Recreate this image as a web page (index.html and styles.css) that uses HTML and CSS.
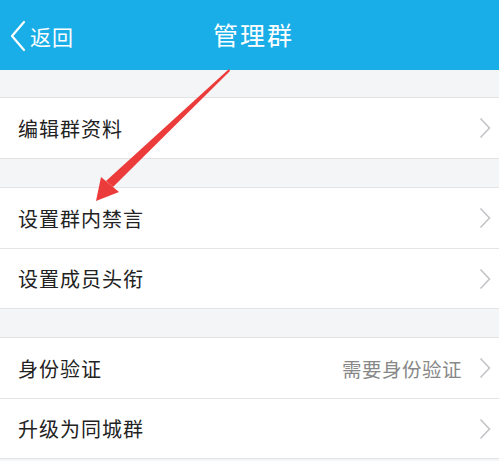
FILE: index.html
```html
<!DOCTYPE html>
<html lang="zh-CN">
<head>
<meta charset="utf-8">
<link rel="stylesheet" href="styles.css">
</head>
<body>
<div class="page">
  <header class="nav">
    <div class="back">
      <svg class="back-icon" width="18" height="32" viewBox="0 0 18 32"><polyline points="15,2 3,16 15,30" fill="none" stroke="#fff" stroke-width="2.2" stroke-linecap="round" stroke-linejoin="round"/></svg>
      <span class="back-text">返回</span>
    </div>
    <div class="title">管理群</div>
  </header>
  <section class="group first">
    <div class="row"><span class="label">编辑群资料</span><svg class="chev" width="12" height="22" viewBox="0 0 12 22"><polyline points="1.5,1.5 10.5,11 1.5,20.5" fill="none" stroke="#c4c4c8" stroke-width="1.6"/></svg></div>
  </section>
  <section class="group">
    <div class="row"><span class="label">设置群内禁言</span><svg class="chev" width="12" height="22" viewBox="0 0 12 22"><polyline points="1.5,1.5 10.5,11 1.5,20.5" fill="none" stroke="#c4c4c8" stroke-width="1.6"/></svg></div>
    <div class="row"><span class="label">设置成员头衔</span><svg class="chev" width="12" height="22" viewBox="0 0 12 22"><polyline points="1.5,1.5 10.5,11 1.5,20.5" fill="none" stroke="#c4c4c8" stroke-width="1.6"/></svg></div>
  </section>
  <section class="group">
    <div class="row"><span class="label">身份验证</span><span class="value">需要身份验证</span><svg class="chev" width="12" height="22" viewBox="0 0 12 22"><polyline points="1.5,1.5 10.5,11 1.5,20.5" fill="none" stroke="#c4c4c8" stroke-width="1.6"/></svg></div>
    <div class="row"><span class="label">升级为同城群</span><svg class="chev" width="12" height="22" viewBox="0 0 12 22"><polyline points="1.5,1.5 10.5,11 1.5,20.5" fill="none" stroke="#c4c4c8" stroke-width="1.6"/></svg></div>
  </section>
  <svg class="arrow" width="499" height="461" viewBox="0 0 499 461">
    <polygon points="229,69 230,71 113,187 106,181" fill="#ec3b3b"/>
    <polygon points="96,201 101,177 119,192" fill="#ec3b3b"/>
  </svg>
</div>
</body>
</html>
```
FILE: styles.css
```css
* { box-sizing: border-box; }
html, body { margin: 0; padding: 0; }
body {
  width: 499px;
  height: 461px;
  overflow: hidden;
  background: #f4f5f7;
  font-family: "Noto Sans CJK SC", "Noto Sans", sans-serif;
}
.page { position: relative; width: 499px; height: 461px; }
.nav {
  height: 70px;
  background: #1aaee8;
  display: flex;
  align-items: center;
  justify-content: center;
  position: relative;
  color: #fff;
}
.back {
  position: absolute;
  left: 9px;
  top: 20px;
  display: flex;
  align-items: center;
  gap: 3px;
}
.back-icon { display: block; }
.back-text { font-size: 21px; line-height: 32px; letter-spacing: 1px; }
.title { font-size: 25px; letter-spacing: 2px; margin-top: -2px; margin-left: 8px; }
.group {
  margin-top: 28px;
  background: #fff;
  border-top: 1px solid #e2e3e5;
  border-bottom: 1px solid #e2e3e5;
}
.group.first { margin-top: 27px; }
.row {
  height: 60px;
  display: flex;
  align-items: center;
  padding: 0 8px 0 18px;
  position: relative;
}
.row + .row { border-top: 1px solid #e4e5e7; height: 60px; }
.label { font-size: 20px; color: #222; letter-spacing: 1px; flex: 1; }
.value { font-size: 19.5px; color: #888; margin-right: 17px; letter-spacing: 0.5px; }
.chev { display: block; }
.arrow { position: absolute; left: 0; top: 0; pointer-events: none; }
```
